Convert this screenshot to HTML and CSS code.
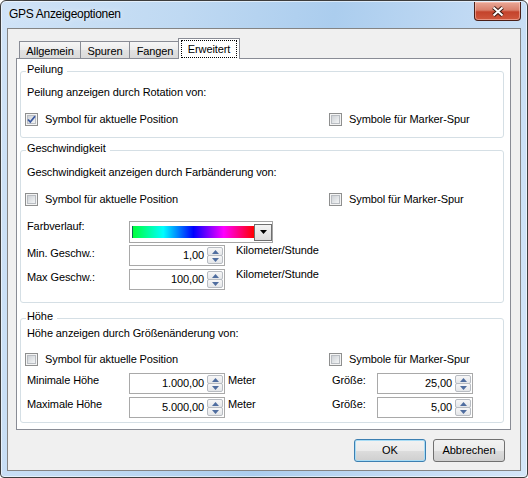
FILE: index.html
```html
<!DOCTYPE html>
<html lang="de">

<head>
    <meta charset="UTF-8">
    <title>GPS Anzeigeoptionen</title>
    <link rel="stylesheet" href="styles.css">
</head>

<body>
    <div class="window">
        <div class="titlebar">
            <span class="title">GPS Anzeigeoptionen</span>
            <button class="close" title="Schließen">
                <svg width="14" height="11" viewBox="0 0 14 11">
                    <path d="M2.5 1.5 L11.5 9.5 M11.5 1.5 L2.5 9.5" stroke="#3b1a12" stroke-width="4" fill="none" />
                    <path d="M2.5 1.5 L11.5 9.5 M11.5 1.5 L2.5 9.5" stroke="#fff" stroke-width="2" fill="none" />
                </svg>
            </button>
        </div>

        <div class="client">
            <div class="tabs">
                <div class="tab tab-allgemein">Allgemein</div>
                <div class="tab tab-spuren">Spuren</div>
                <div class="tab tab-fangen">Fangen</div>
                <div class="tab active"><span class="focus">Erweitert</span></div>
            </div>

            <div class="tab-page">
                <!-- Peilung -->
                <fieldset class="group bearing">
                    <legend>Peilung</legend>
                    <div class="desc">Peilung anzeigen durch Rotation von:</div>
                    <div class="check-row">
                        <label class="check">
                            <span class="box">
                                <svg width="11" height="11" viewBox="0 0 11 11">
                                    <path d="M2 5.5 L4.3 8 L9 2.3" stroke="#3a58a0" stroke-width="1.8" fill="none" />
                                </svg>
                            </span>
                            Symbol für aktuelle Position
                        </label>
                        <label class="check"><span class="box"></span>Symbole für Marker-Spur</label>
                    </div>
                </fieldset>

                <!-- Geschwindigkeit -->
                <fieldset class="group speed">
                    <legend>Geschwindigkeit</legend>
                    <div class="desc">Geschwindigkeit anzeigen durch Farbänderung von:</div>
                    <div class="check-row">
                        <label class="check"><span class="box"></span>Symbol für aktuelle Position</label>
                        <label class="check"><span class="box"></span>Symbol für Marker-Spur</label>
                    </div>
                    <div class="field-row row-gradient">
                        <span class="field-label up1">Farbverlauf:</span>
                        <div class="combo">
                            <span class="gradient"></span>
                            <span class="drop">
                                <svg width="7" height="4" viewBox="0 0 7 4"><polygon points="0,0 7,0 3.5,4" fill="#000" /></svg>
                            </span>
                        </div>
                    </div>
                    <div class="field-row row-min">
                        <span class="field-label">Min. Geschw.:</span>
                        <div class="spin">
                            <span class="value">1,00</span>
                            <span class="spin-btns">
                                <span class="arrow"><svg width="7" height="4" viewBox="0 0 7 4"><polygon points="3.5,0 7,4 0,4" fill="#4f6d9f" /></svg></span>
                                <span class="arrow"><svg width="7" height="4" viewBox="0 0 7 4"><polygon points="0,0 7,0 3.5,4" fill="#4f6d9f" /></svg></span>
                            </span>
                        </div>
                        <span class="unit kmh">Kilometer/Stunde</span>
                    </div>
                    <div class="field-row row-max">
                        <span class="field-label">Max Geschw.:</span>
                        <div class="spin">
                            <span class="value">100,00</span>
                            <span class="spin-btns">
                                <span class="arrow"><svg width="7" height="4" viewBox="0 0 7 4"><polygon points="3.5,0 7,4 0,4" fill="#4f6d9f" /></svg></span>
                                <span class="arrow"><svg width="7" height="4" viewBox="0 0 7 4"><polygon points="0,0 7,0 3.5,4" fill="#4f6d9f" /></svg></span>
                            </span>
                        </div>
                        <span class="unit kmh">Kilometer/Stunde</span>
                    </div>
                </fieldset>

                <!-- Höhe -->
                <fieldset class="group height">
                    <legend>Höhe</legend>
                    <div class="desc">Höhe anzeigen durch Größenänderung von:</div>
                    <div class="check-row">
                        <label class="check"><span class="box"></span>Symbol für aktuelle Position</label>
                        <label class="check"><span class="box"></span>Symbole für Marker-Spur</label>
                    </div>
                    <div class="field-row row-min">
                        <span class="field-label down1">Minimale Höhe</span>
                        <div class="spin">
                            <span class="value">1.000,00</span>
                            <span class="spin-btns">
                                <span class="arrow"><svg width="7" height="4" viewBox="0 0 7 4"><polygon points="3.5,0 7,4 0,4" fill="#4f6d9f" /></svg></span>
                                <span class="arrow"><svg width="7" height="4" viewBox="0 0 7 4"><polygon points="0,0 7,0 3.5,4" fill="#4f6d9f" /></svg></span>
                            </span>
                        </div>
                        <span class="unit meter">Meter</span>
                        <span class="field-label size">Größe:</span>
                        <div class="spin">
                            <span class="value">25,00</span>
                            <span class="spin-btns">
                                <span class="arrow"><svg width="7" height="4" viewBox="0 0 7 4"><polygon points="3.5,0 7,4 0,4" fill="#4f6d9f" /></svg></span>
                                <span class="arrow"><svg width="7" height="4" viewBox="0 0 7 4"><polygon points="0,0 7,0 3.5,4" fill="#4f6d9f" /></svg></span>
                            </span>
                        </div>
                    </div>
                    <div class="field-row row-max">
                        <span class="field-label down1">Maximale Höhe</span>
                        <div class="spin">
                            <span class="value">5.000,00</span>
                            <span class="spin-btns">
                                <span class="arrow"><svg width="7" height="4" viewBox="0 0 7 4"><polygon points="3.5,0 7,4 0,4" fill="#4f6d9f" /></svg></span>
                                <span class="arrow"><svg width="7" height="4" viewBox="0 0 7 4"><polygon points="0,0 7,0 3.5,4" fill="#4f6d9f" /></svg></span>
                            </span>
                        </div>
                        <span class="unit meter">Meter</span>
                        <span class="field-label size">Größe:</span>
                        <div class="spin">
                            <span class="value">5,00</span>
                            <span class="spin-btns">
                                <span class="arrow"><svg width="7" height="4" viewBox="0 0 7 4"><polygon points="3.5,0 7,4 0,4" fill="#4f6d9f" /></svg></span>
                                <span class="arrow"><svg width="7" height="4" viewBox="0 0 7 4"><polygon points="0,0 7,0 3.5,4" fill="#4f6d9f" /></svg></span>
                            </span>
                        </div>
                    </div>
                </fieldset>
            </div>

            <div class="buttons">
                <button class="btn default">OK</button>
                <button class="btn">Abbrechen</button>
            </div>
        </div>
    </div>
</body>

</html>
```

FILE: styles.css
```css
* {
    box-sizing: border-box;
}

body {
    margin: 0;
    background: #fff;
    font-family: "Liberation Sans", Arial, sans-serif;
    font-size: 11px;
    line-height: 13px;
    letter-spacing: -0.1px;
    color: #000;
}

/* window frame */
.window {
    width: 528px;
    height: 478px;
    border: 1px solid #3d3d3d;
    border-radius: 6px 6px 4px 4px;
    padding: 0 6px 6px;
    background: linear-gradient(100deg, #d0e3f7 0%, #bfd9f2 30%, #abcdee 55%, #c3dbf4 80%, #d4e6f8 100%);
    box-shadow: inset 0 0 0 1px rgba(255, 255, 255, 0.55);
}

.titlebar {
    height: 27px;
    display: flex;
    justify-content: space-between;
    align-items: flex-start;
}

.title {
    padding: 6px 0 0 2px;
    font-size: 12px;
    line-height: 15px;
    letter-spacing: -0.3px;
    text-shadow: 0 0 6px rgba(255, 255, 255, 0.8);
}

.close {
    width: 47px;
    height: 19px;
    margin-top: 1px;
    padding: 0;
    border: 1px solid #4a1f17;
    border-top: 0;
    border-radius: 0 0 4px 4px;
    background: linear-gradient(#e9a897, #d9806c 45%, #c4432b 55%, #d0583e);
    box-shadow: inset 0 0 0 1px rgba(255, 210, 200, 0.5);
    display: flex;
    align-items: center;
    justify-content: center;
}

.close svg {
    display: block;
}

/* client area */
.client {
    height: 443px;
    border: 1px solid #848484;
    background: #f0f0f0;
    padding: 9px 9px 8px 8px;
    display: flex;
    flex-direction: column;
}

/* tabs */
.tabs {
    display: flex;
    height: 20px;
    padding-left: 3px;
    position: relative;
    z-index: 1;
}

.tab {
    margin-top: 3px;
    height: 17px;
    padding-top: 3px;
    border: 1px solid #898c95;
    border-bottom: 0;
    background: linear-gradient(#f6f6f6, #ececec 50%, #e2e2e2 51%, #dadada);
    text-align: center;
}

.tab + .tab {
    margin-left: -1px;
}

.tab-allgemein {
    width: 62px;
}

.tab-spuren {
    width: 50px;
}

.tab-fangen {
    width: 52px;
}

.tab.active {
    width: 62px;
    height: 21px;
    margin-top: 0;
    margin-left: -3px;
    padding-top: 1px;
    background: #fff;
}

.focus {
    display: block;
    height: 18px;
    margin: 0 2px;
    padding-top: 2px;
    border: 1px dotted #000;
}

.tab-page {
    height: 372px;
    border: 1px solid #898c95;
    background: #fff;
    padding: 4px 6px 0 3px;
}

/* group boxes */
.group {
    margin: 0;
    padding: 0 0 11px;
    min-width: 0;
    border: 1px solid #d5dfe5;
    border-radius: 3px;
}

.group legend {
    margin-left: 5px;
    padding: 0 4px 4px 1px;
    line-height: 13px;
}

.speed {
    margin-top: 4px;
    padding-bottom: 12px;
}

.height {
    margin-top: 7px;
    padding-bottom: 4px;
}

.desc {
    padding-left: 6px;
    height: 13px;
}

.bearing .desc {
    margin-top: 6px;
}

.speed .desc {
    margin-top: 7px;
}

.check-row {
    display: flex;
    padding-left: 4px;
    margin-top: 14px;
    height: 13px;
}

.height .check-row {
    margin-top: 13px;
}

.check {
    display: flex;
    align-items: center;
    gap: 7px;
}

.check:first-child {
    width: 304px;
}

.box {
    width: 13px;
    height: 13px;
    border: 1px solid #8e8f8f;
    background: linear-gradient(135deg, #c4c8cd, #eceef0 70%, #f8f8f8);
    box-shadow: inset 0 0 0 1px #f4f4f4, inset 0 0 0 2px #b9bdc2;
}

.box svg {
    display: block;
}

/* label + control rows */
.field-row {
    display: flex;
    align-items: flex-start;
    padding-left: 6px;
}

.field-label {
    width: 102px;
    margin-top: 2px;
}

.field-label.up1 {
    margin-top: -1px;
}

.field-label.down1 {
    margin-top: 1px;
}

.field-label.size {
    width: 45px;
    margin-top: 1px;
}

.row-gradient {
    margin-top: 15px;
}

.speed .row-min {
    margin-top: 2px;
}

.height .row-min {
    margin-top: 7px;
}

.row-max {
    margin-top: 3px;
}

.unit.kmh {
    margin: -1px 0 0 11px;
}

.unit.meter {
    width: 104px;
    margin: 1px 0 0 3px;
}

.combo {
    width: 144px;
    height: 22px;
    border: 1px solid #a5a5a5;
    padding-left: 2px;
    display: flex;
    align-items: center;
}

.gradient {
    width: 122px;
    height: 12px;
    border-left: 1px solid #0a6b55;
    background: linear-gradient(90deg, #00ff3c 0%, #00ffff 25%, #0000ff 50%, #ff00ff 75%, #ff0000 100%);
}

.drop {
    width: 18px;
    height: 17px;
    border: 1px solid #6f6f6f;
    background: linear-gradient(#f4f4f4, #dcdcdc);
    display: flex;
    align-items: center;
    justify-content: center;
}

.drop svg {
    display: block;
}

.spin {
    width: 96px;
    height: 21px;
    border: 1px solid #a9a9a9;
    background: #fff;
    padding-right: 1px;
    display: flex;
    align-items: center;
}

.value {
    flex: 1;
    text-align: right;
    padding-right: 3px;
}

.spin-btns {
    width: 16px;
    height: 17px;
    display: flex;
    flex-direction: column;
}

.arrow {
    flex: 1;
    border: 1px solid #b8bcc2;
    border-radius: 2px;
    background: linear-gradient(#f7f7f7, #e4e6e9);
    display: flex;
    align-items: center;
    justify-content: center;
}

.arrow + .arrow {
    margin-top: -1px;
}

.arrow svg {
    display: block;
}

/* dialog buttons */
.buttons {
    display: flex;
    justify-content: flex-end;
    gap: 7px;
    margin-top: 9px;
    padding-right: 6px;
}

.btn {
    width: 72px;
    height: 23px;
    padding: 0;
    border: 1px solid #707070;
    border-radius: 3px;
    background: linear-gradient(#f2f2f2, #ebebeb 50%, #dddddd 51%, #cfcfcf);
    font: inherit;
    color: #000;
}

.btn.default {
    border-color: #3c7fb1;
    box-shadow: inset 0 0 0 1px #a8dcf5;
}
```
